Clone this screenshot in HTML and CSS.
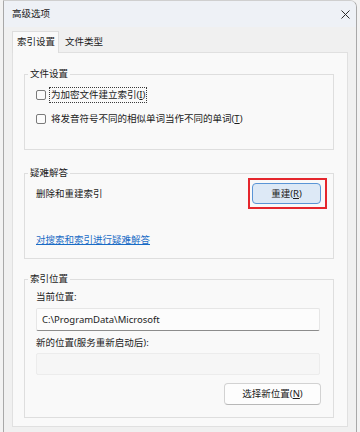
FILE: index.html
```html
<!DOCTYPE html>
<html lang="zh-CN">
<head>
<meta charset="UTF-8" />
<meta name="viewport" content="width=device-width, initial-scale=1" />
<title>高级选项</title>
<link rel="stylesheet" href="styles.css">
</head>
<body>
  <div class="window">
    <div class="titlebar">
      <span class="title">高级选项</span>
      <svg class="close" width="9" height="9" viewBox="0 0 9 9" aria-label="关闭">
        <path d="M0.5 0.5 L8.5 8.5 M8.5 0.5 L0.5 8.5" stroke="#2b2b2b" stroke-width="1" fill="none" />
      </svg>
    </div>

    <div class="tabs">
      <div class="tab active">索引设置</div>
      <div class="tab">文件类型</div>
    </div>

    <div class="panel">
      <!-- 文件设置 -->
      <fieldset class="group group-files">
        <legend>文件设置</legend>
        <label class="check first">
          <span class="box"></span>
          <span class="check-text focused">为加密文件建立索引(<u>I</u>)</span>
        </label>
        <label class="check second">
          <span class="box"></span>
          <span class="check-text">将发音符号不同的相似单词当作不同的单词(<u>T</u>)</span>
        </label>
      </fieldset>

      <!-- 疑难解答 -->
      <fieldset class="group group-trouble">
        <legend>疑难解答</legend>
        <div class="row">
          <span>删除和重建索引</span>
          <span class="highlight">
            <button class="btn btn-primary" type="button">重建(<u>R</u>)</button>
          </span>
        </div>
        <a class="link" href="#">对搜索和索引进行疑难解答</a>
      </fieldset>

      <!-- 索引位置 -->
      <fieldset class="group group-location">
        <legend>索引位置</legend>
        <div class="field-label">当前位置:</div>
        <div class="field">C:\ProgramData\Microsoft</div>
        <div class="field-label second">新的位置(服务重新启动后):</div>
        <div class="field disabled"></div>
        <div class="actions">
          <button class="btn" type="button">选择新位置(<u>N</u>)</button>
        </div>
      </fieldset>
    </div>
  </div>
</body>
</html>
```

FILE: styles.css
```css
* {
  box-sizing: border-box;
}

body {
  margin: 0;
  height: 432px;
  overflow: hidden;
  background-color: #f2f2f2;
  color: #1b1b1b;
  font-family: "Noto Sans", "Noto Sans CJK SC", sans-serif;
  font-size: 9.5px;
  line-height: 14px;
}

/* Janela */
.window {
  margin-left: 3px;
  width: 354px;
  height: 440px;
  background-color: #f0f0f0;
  border: 1px solid #a8a8a8;
  border-top-color: #cfcfcf;
  border-top-right-radius: 7px;
  overflow: hidden;
}

.titlebar {
  height: 26px;
  display: flex;
  align-items: center;
  justify-content: space-between;
  padding: 0 6px 0 8px;
  background-color: #eef1f6;
}
.close {
  display: block;
}

/* Abas */
.tabs {
  height: 25px;
  display: flex;
  align-items: flex-end;
  padding-left: 8px;
}
.tab {
  height: 21px;
  padding: 0 6px;
  line-height: 22px;
  color: #1b1b1b;
}
.tab.active {
  position: relative;
  z-index: 1;
  height: 22px;
  margin-bottom: -1px;
  padding: 0 3px 0 4px;
  line-height: 20px;
  background-color: #f9f9f9;
  border: 1px solid #dddddd;
  border-bottom: none;
}

.panel {
  margin-left: 8px;
  width: 336px;
  height: 375px;
  padding: 14px 13px 0 11px;
  background-color: #f9f9f9;
  border: 1px solid #e0e0e0;
}

/* Grupos */
.group {
  margin: 0;
  padding: 0 11px;
  border: 1px solid #dedede;
}
.group legend {
  margin-left: -8px;
  padding: 0 2px;
  line-height: 14px;
}
.group-files {
  padding-bottom: 22px;
}
.group-trouble {
  margin-top: 16px;
  padding-bottom: 11px;
}
.group-location {
  margin-top: 13px;
  padding-bottom: 12px;
}

/* Caixas de seleção */
.check {
  display: flex;
  align-items: center;
  height: 16px;
}
.check.first {
  margin-top: 6px;
}
.check.second {
  margin-top: 8px;
}
.box {
  width: 10px;
  height: 10px;
  margin-right: 3px;
  border: 1px solid #7a7a7a;
  border-radius: 2px;
  background-color: #fbfbfb;
}
.check-text {
  padding: 0 1px;
  border: 1px solid transparent;
}
.check-text.focused {
  border: 1px dotted #3a3a3a;
}

.row {
  margin-top: 3px;
  height: 21px;
  display: flex;
  align-items: center;
  justify-content: space-between;
  padding-right: 1px;
}

/* Moldura vermelha de destaque */
.highlight {
  display: flex;
  margin: -5px -6px -5px 0;
  padding: 3px 4px 3px 2px;
  border: 2px solid #e5262d;
}

.link {
  display: inline-block;
  margin-top: 29px;
  color: #1a6cc6;
  text-decoration: underline;
}

/* Botões */
.btn {
  height: 22px;
  padding: 0;
  font: inherit;
  color: #1b1b1b;
  background-color: #fdfdfd;
  border: 1px solid #d2d2d2;
  border-bottom-color: #b8b8b8;
  border-radius: 4px;
  cursor: pointer;
}
.btn-primary {
  width: 69px;
  height: 21px;
  background-color: #dde9f6;
  border: 1px solid #5a95d6;
}

/* Campos */
.field-label {
  margin-top: 4px;
}
.field-label.second {
  margin-top: 5px;
}
.field {
  width: 284px;
  height: 23px;
  margin-top: 4px;
  padding-left: 5px;
  line-height: 21px;
  background-color: #fcfcfc;
  border: 1px solid #e6e6e6;
  border-bottom-color: #8c8c8c;
  border-radius: 2px;
}
.field.disabled {
  height: 22px;
  margin-top: 3px;
  background-color: #f6f6f6;
  border-color: #ececec;
}

.actions {
  margin-top: 8px;
  display: flex;
  justify-content: flex-end;
  padding-right: 1px;
}
.actions .btn {
  width: 97px;
}
```
